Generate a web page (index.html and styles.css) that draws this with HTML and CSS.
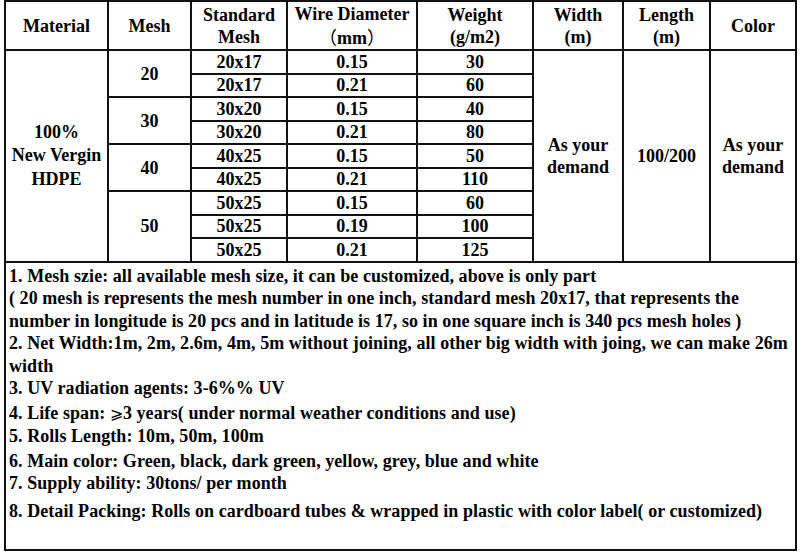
FILE: index.html
```html
<!DOCTYPE html>
<html>
<head>
<meta charset="utf-8">
<link rel="stylesheet" href="styles.css">
</head>
<body>
<div class="sheet">
  <div class="cell"><span>Material</span></div>
  <div class="cell"><span>Mesh</span></div>
  <div class="cell"><span>Standard<br>Mesh</span></div>
  <div class="cell"><span>Wire Diameter<br><span class="cjk">（</span>mm<span class="cjk">）</span></span></div>
  <div class="cell"><span>Weight<br>(g/m2)</span></div>
  <div class="cell"><span>Width<br>(m)</span></div>
  <div class="cell"><span>Length<br>(m)</span></div>
  <div class="cell"><span>Color</span></div>

  <div class="cell span9 material"><span>100%<br>New Vergin<br>HDPE</span></div>
  <div class="cell span2"><span>20</span></div>
  <div class="cell"><span>20x17</span></div>
  <div class="cell"><span>0.15</span></div>
  <div class="cell"><span>30</span></div>
  <div class="cell span9"><span>As your<br>demand</span></div>
  <div class="cell span9"><span>100/200</span></div>
  <div class="cell span9"><span>As your<br>demand</span></div>

  <div class="cell"><span>20x17</span></div>
  <div class="cell"><span>0.21</span></div>
  <div class="cell"><span>60</span></div>

  <div class="cell span2"><span>30</span></div>
  <div class="cell"><span>30x20</span></div>
  <div class="cell"><span>0.15</span></div>
  <div class="cell"><span>40</span></div>

  <div class="cell"><span>30x20</span></div>
  <div class="cell"><span>0.21</span></div>
  <div class="cell"><span>80</span></div>

  <div class="cell span2"><span>40</span></div>
  <div class="cell"><span>40x25</span></div>
  <div class="cell"><span>0.15</span></div>
  <div class="cell"><span>50</span></div>

  <div class="cell"><span>40x25</span></div>
  <div class="cell"><span>0.21</span></div>
  <div class="cell"><span>110</span></div>

  <div class="cell span3"><span>50</span></div>
  <div class="cell"><span>50x25</span></div>
  <div class="cell"><span>0.15</span></div>
  <div class="cell"><span>60</span></div>

  <div class="cell"><span>50x25</span></div>
  <div class="cell"><span>0.19</span></div>
  <div class="cell"><span>100</span></div>

  <div class="cell"><span>50x25</span></div>
  <div class="cell"><span>0.21</span></div>
  <div class="cell"><span>125</span></div>

  <div class="notes">
    <p>1. Mesh szie: all available mesh size, it can be customized, above is only part</p>
    <p>( 20 mesh is represents the mesh number in one inch, standard mesh 20x17, that represents the number in longitude is 20 pcs and in latitude is 17, so in one square inch is 340 pcs mesh holes )</p>
    <p>2. Net Width:1m, 2m, 2.6m, 4m, 5m without joining, all other big width with joing, we can make 26m width</p>
    <p>3. UV radiation agents: 3-6%% UV</p>
    <p class="gap2">4. Life span: <span class="ge">⩾</span>3 years( under normal weather conditions and use)</p>
    <p>5. Rolls Length: 10m, 50m, 100m</p>
    <p class="gap2">6. Main color: Green, black, dark green, yellow, grey, blue and white</p>
    <p>7. Supply ability: 30tons/ per month</p>
    <p class="gap5">8. Detail Packing: Rolls on cardboard tubes &amp; wrapped in plastic with color label( or customized)</p>
  </div>
</div>
</body>
</html>
```

FILE: styles.css
```css
html, body {
  margin: 0;
  padding: 0;
  background: #fff;
}

.sheet {
  display: grid;
  width: max-content;
  margin-left: 4px;
  grid-template-columns: 101px 81px 94px 128px 114px 88px 85px 84px;
  grid-template-rows: 47px repeat(9, 21.5px) 286.5px;
  gap: 2px;
  padding: 2px;
  background: #111;
  font: bold 18px "Liberation Serif", "Noto Sans CJK SC", serif;
  color: #000;
}

.cell {
  background: #fff;
  display: flex;
  align-items: center;
  justify-content: center;
  text-align: center;
  line-height: 22px;
  white-space: nowrap;
}

.cjk {
  font-family: "Noto Sans CJK SC", sans-serif;
  font-weight: normal;
}

.span2 { grid-row: span 2; }
.span3 { grid-row: span 3; }
.span9 { grid-row: span 9; }

.material { line-height: 23.5px; }

.notes {
  grid-column: 1 / -1;
  background: #fff;
  padding: 2px 3px 0 3px;
  line-height: 22.5px;
  letter-spacing: 0.06px;
}

.notes p {
  margin: 0;
}

.notes .gap2 { margin-top: 2px; }
.notes .gap5 { margin-top: 5px; }

.ge {
  font-family: "DejaVu Serif", serif;
  font-weight: normal;
  font-size: 16px;
}
```
